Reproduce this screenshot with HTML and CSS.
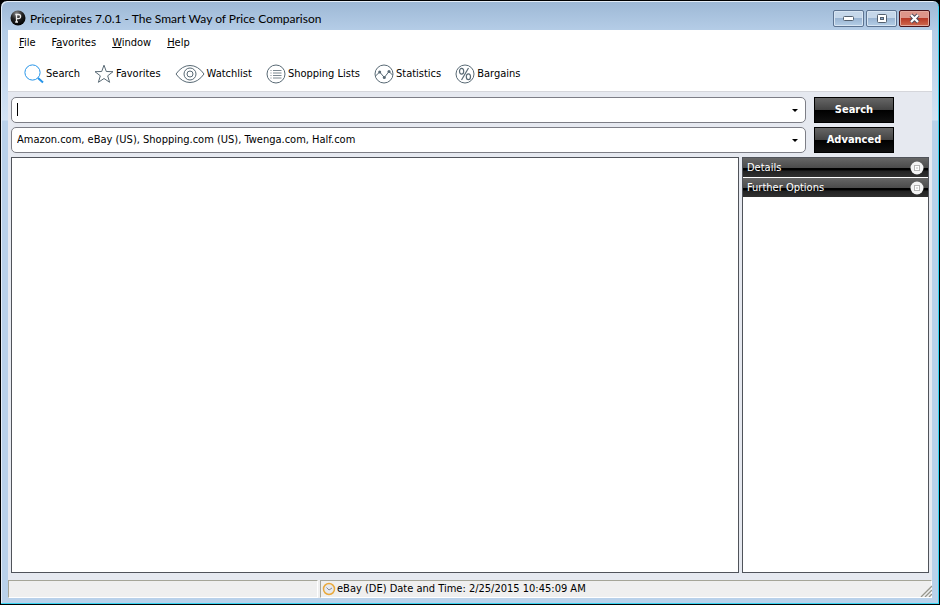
FILE: index.html
```html
<!DOCTYPE html>
<html lang="en">
<head>
<meta charset="utf-8">
<title>Pricepirates 7.0.1</title>
<link rel="stylesheet" href="styles.css">
</head>
<body>
<div class="window">
  <header class="titlebar">
    <svg class="logo" width="16" height="16" viewBox="0 0 16 16" aria-hidden="true">
      <defs><radialGradient id="ball" cx="0.4" cy="0.2" r="0.8"><stop offset="0" stop-color="#888"/><stop offset="0.5" stop-color="#222"/><stop offset="1" stop-color="#000"/></radialGradient></defs>
      <circle cx="8" cy="8" r="7.5" fill="url(#ball)"/>
      <path d="M6.5 12V4.5H8.5a2 2 0 0 1 0 4.2H6.5M5.3 4.5h1.5M5.2 12h2.8" fill="none" stroke="#eee" stroke-width="1.3"/>
    </svg>
    <h1 class="title">Pricepirates 7.0.1 - The Smart Way of Price Comparison</h1>
    <div class="controls">
      <button class="control" aria-label="Minimize"><svg width="13" height="7" viewBox="0 0 13 7"><rect x="1.500" y="1.500" width="10" height="4" rx="1" fill="#fff" stroke="#53606f"/></svg></button>
      <button class="control" aria-label="Maximize"><svg width="12" height="11" viewBox="0 0 12 11"><rect x="1.500" y="1.500" width="9" height="8" rx="1" fill="#fff" stroke="#53606f"/><rect x="4.500" y="4.500" width="3" height="2" fill="#8ba9cf" stroke="#53606f"/></svg></button>
      <button class="control close" aria-label="Close"><svg width="13" height="11" viewBox="0 0 13 11"><path d="M3 2l7 7M10 2l-7 7" stroke="#4d4a5a" stroke-width="4"/><path d="M3 2l7 7M10 2l-7 7" stroke="#fff" stroke-width="2.200"/></svg></button>
    </div>
  </header>
  <main class="client">
    <nav class="menu">
      <a href="#file"><u>F</u>ile</a>
      <a href="#favorites">F<u>a</u>vorites</a>
      <a href="#window"><u>W</u>indow</a>
      <a href="#help"><u>H</u>elp</a>
    </nav>
    <div class="toolbar">
      <button class="tool"><svg class="blue" width="20" height="20" viewBox="0 0 20 20"><circle cx="8.500" cy="8.500" r="7.600"/><path d="M14 14l5 4.500" stroke-width="2"/></svg>Search</button>
      <button class="tool"><svg width="20" height="20" viewBox="0 0 20 20"><path d="M10 1.200l2.300 6.300 6.700.2-5.300 4.100 1.900 6.500-5.600-3.800-5.600 3.800 1.900-6.500L1 7.700l6.700-.2z"/></svg>Favorites</button>
      <button class="tool"><svg width="30" height="20" viewBox="0 0 30 20"><path d="M1 10Q7 1.500 15 1.500T29 10Q23 18.500 15 18.500T1 10z"/><circle cx="15" cy="10" r="6"/><circle cx="15" cy="10" r="3"/></svg>Watchlist</button>
      <button class="tool"><svg width="20" height="20" viewBox="0 0 20 20"><circle cx="10" cy="10" r="9"/><path d="M4.500 6.500h1M7 6.500h8.500M4.500 9h1M7 9h8.500M4.500 11.500h1M7 11.500h8.500M4.500 14h1M7 14h8.500" stroke-width="0.800"/></svg>Shopping Lists</button>
      <button class="tool"><svg width="20" height="20" viewBox="0 0 20 20"><circle cx="10" cy="10" r="9"/><path d="M1.500 12l4.200-4 4.600 5.500 4.700-6 3.500 3.500"/><g class="dots"><circle cx="5.700" cy="8" r="1.500"/><circle cx="10.300" cy="13.500" r="1.500"/><circle cx="15" cy="7.500" r="1.500"/></g></svg>Statistics</button>
      <button class="tool"><svg width="20" height="20" viewBox="0 0 20 20"><circle cx="10" cy="10" r="9"/><path d="M13.500 4l-7 12" stroke-width="1.200"/><ellipse cx="6.600" cy="7.300" rx="2.100" ry="2.900" stroke-width="1.200"/><ellipse cx="13.400" cy="12.700" rx="2.100" ry="2.900" stroke-width="1.200"/></svg>Bargains</button>
    </div>
    <form class="search">
      <div class="combo">
        <input class="field" type="text" aria-label="Search term">
        <span class="caret"></span>
        <button class="drop" type="button" aria-label="Recent searches"><svg width="6" height="3" viewBox="0 0 6 3"><path d="M0 0h6L3 3z"/></svg></button>
      </div>
      <button class="action" type="button">Search</button>
      <div class="combo">
        <select class="field" aria-label="Shops"><option>Amazon.com, eBay (US), Shopping.com (US), Twenga.com, Half.com</option></select>
        <span class="drop mark"><svg width="6" height="3" viewBox="0 0 6 3"><path d="M0 0h6L3 3z"/></svg></span>
      </div>
      <button class="action" type="button">Advanced</button>
    </form>
    <div class="content">
      <section class="results" aria-label="Results"></section>
      <aside class="side">
        <button class="panel">Details<svg width="14" height="14" viewBox="0 0 14 14"><circle cx="7" cy="7" r="6.500" fill="#f4f4f4"/><rect x="4.500" y="4.500" width="5" height="5" fill="#fff" stroke="#b5b5b5"/><path d="M6 7h2" stroke="#bbb"/></svg></button>
        <button class="panel">Further Options<svg width="14" height="14" viewBox="0 0 14 14"><circle cx="7" cy="7" r="6.500" fill="#f4f4f4"/><rect x="4.500" y="4.500" width="5" height="5" fill="#fff" stroke="#b5b5b5"/><path d="M6 7h2" stroke="#bbb"/></svg></button>
      </aside>
    </div>
    <footer class="status">
      <div class="cell"></div>
      <div class="cell"><svg width="14" height="14" viewBox="0 0 14 14"><circle cx="7" cy="7" r="5.500" fill="#e6e9ee" stroke="#e9a93c" stroke-width="1.500"/><path d="M4.500 5.500L7 8l3-2" fill="none" stroke="#858b98"/></svg>eBay (DE) Date and Time: 2/25/2015 10:45:09 AM</div>
      <svg class="grip" width="12" height="12" viewBox="0 0 12 12"><path d="M1 12L12 1M5 12l7-7M9 12l3-3" stroke="#96968c" stroke-width="1.300"/></svg>
    </footer>
  </main>
</div>
</body>
</html>
```
FILE: styles.css
```css
* { box-sizing: border-box; }
body {
  margin: 0;
  background: #000;
  font: 11px/14px "DejaVu Sans Condensed", "DejaVu Sans", sans-serif;
  color: #000;
}
button, input, select { font: inherit; color: inherit; margin: 0; }
button { padding: 0; border: 0; background: none; }
svg { display: block; flex: none; }

.window {
  height: 100vh;
  display: flex;
  flex-direction: column;
  padding: 0 7px 6px;
  border: 1px solid #000;
  border-radius: 7px 7px 0 0;
  background: linear-gradient(#9db8d5, #b5cde7 30px, #d3e3f4 119px, #b9d1ea 120px);
  box-shadow: inset -1px -1px #38d4f2, inset 1px 1px #e4edf7;
}

.titlebar { display: flex; height: 29px; padding: 5px 2px 0; }
.logo { margin-top: 4px; }
.title {
  flex: 1;
  margin: 5px 0 0 4px;
  font: 12px/16px Lato, sans-serif;
}
.controls { display: flex; gap: 2px; margin-top: 4px; }
.control {
  display: flex;
  width: 31px;
  height: 17px;
  align-items: center;
  justify-content: center;
  border: 1px solid #5c7391;
  border-radius: 2px;
  background: linear-gradient(#c5d7ea 50%, #9ab5d3 50%, #b5cee6);
  box-shadow: inset 0 0 0 1px #d7e5f3;
}
.close {
  border-color: #4a1319;
  background: linear-gradient(#dd9589 45%, #b83a27 50%, #cf6a50);
  box-shadow: inset 0 0 0 1px #e2a99e;
}

.client {
  flex: 1;
  display: flex;
  flex-direction: column;
  min-height: 0;
  background: #e6e9f0;
}
.menu { display: flex; gap: 16px; padding: 6px 11px; background: #fff; }
.menu a { color: inherit; text-decoration: none; }
.menu u { text-underline-offset: 1px; }

.toolbar {
  display: flex;
  gap: 14px;
  height: 36px;
  padding: 0 16px;
  background: #fff;
  border-bottom: 1px solid #d5d6db;
}
.tool { display: flex; align-items: center; gap: 2px; }
.tool svg { fill: none; stroke: #596a75; }
.tool .blue { stroke: #2795e9; }
.dots { fill: #596a75; stroke: none; }

.search {
  display: grid;
  grid-template-columns: 1fr 80px;
  gap: 4px 8px;
  padding: 5px 38px 4px 3px;
}
.combo { position: relative; height: 26px; }
.field {
  appearance: none;
  width: 100%;
  height: 26px;
  padding: 0 24px 0 5px;
  border: 1px solid #7d7e86;
  border-radius: 5px;
  background: #fff;
  outline: 0;
}
.caret { position: absolute; top: 6px; left: 6px; width: 1px; height: 13px; background: #000; }
.drop {
  position: absolute;
  top: 1px;
  right: 1px;
  bottom: 1px;
  width: 20px;
  display: flex;
  align-items: center;
  justify-content: center;
}
.mark { pointer-events: none; }
.action {
  height: 26px;
  border: 1px solid #000;
  background: linear-gradient(#666, #434343 50%, #000 50%, #101010);
  color: #fff;
  font-weight: bold;
}

.content {
  flex: 1;
  display: grid;
  grid-template-columns: 1fr 187px;
  gap: 3px;
  padding: 0 3px 7px;
  min-height: 0;
}
.results, .side { border: 1px solid #50535a; background: #fff; }
.side { display: flex; flex-direction: column; gap: 1px; }
.panel {
  display: flex;
  align-items: center;
  justify-content: space-between;
  height: 19px;
  padding: 0 4px;
  background: linear-gradient(#666, #4c4c4c 50%, #000 53%, #000 63%, #222 68%, #303030);
  color: #fff;
}

.status {
  position: relative;
  display: grid;
  grid-template-columns: 310px 1fr;
  gap: 2px;
  height: 18px;
  background: #efefef;
}
.cell {
  display: flex;
  align-items: center;
  gap: 1px;
  padding-left: 1px;
  border: 1px solid #a5a598;
  border-color: #a5a598 #fff #fff #a5a598;
}
.grip { position: absolute; right: 0; bottom: 1px; }
```
